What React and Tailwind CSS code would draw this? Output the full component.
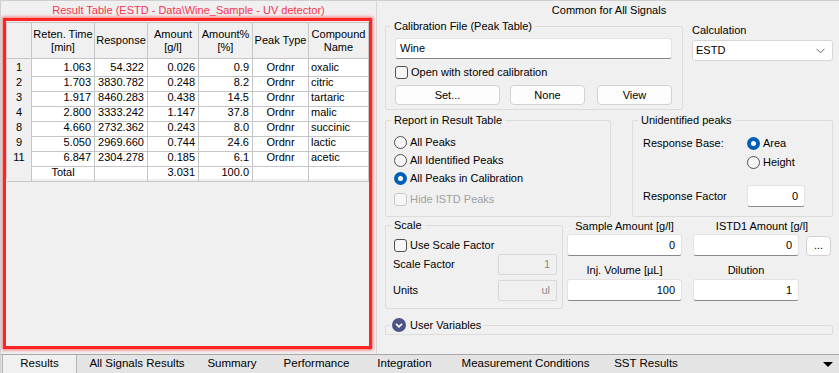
import React from "react";

const rows = [
    ["1", "1.063", "54.322", "0.026", "0.9", "Ordnr", "oxalic"],
    ["2", "1.703", "3830.782", "0.248", "8.2", "Ordnr", "citric"],
    ["3", "1.917", "8460.283", "0.438", "14.5", "Ordnr", "tartaric"],
    ["4", "2.800", "3333.242", "1.147", "37.8", "Ordnr", "malic"],
    ["8", "4.660", "2732.362", "0.243", "8.0", "Ordnr", "succinic"],
    ["9", "5.050", "2969.660", "0.744", "24.6", "Ordnr", "lactic"],
    ["11", "6.847", "2304.278", "0.185", "6.1", "Ordnr", "acetic"],
];

const tabs = [
    ["Results", "w-[75px]"],
    ["All Signals Results", "w-[120px]"],
    ["Summary", "w-[70px]"],
    ["Performance", "w-[99px]"],
    ["Integration", "w-[77px]"],
    ["Measurement Conditions", "w-[165px]"],
    ["SST Results", "w-[76px]"],
];

const cell = "border-r border-b border-[#c6c6c6] flex items-center";

const Radio = ({ checked, label }) => (
    <div className="flex items-center h-[18px] gap-[3px]">
        {checked ? (
            <span className="w-[13px] h-[13px] rounded-full bg-[#005fb8] flex items-center justify-center">
                <span className="w-[5px] h-[5px] rounded-full bg-white" />
            </span>
        ) : (
            <span className="w-[13px] h-[13px] rounded-full border border-[#505050] bg-[#f6f6f6]" />
        )}
        <span>{label}</span>
    </div>
);

const Check = ({ label, disabled }) => (
    <div className={`flex items-center gap-[3px] ${disabled ? "text-[#a0a0a0]" : ""}`}>
        <span
            className={`w-[13px] h-[13px] rounded-[3px] border bg-[#f6f6f6] ${
                disabled ? "border-[#c8c8c8]" : "border-[#505050]"
            }`}
        />
        <span>{label}</span>
    </div>
);

const Legend = ({ children }) => (
    <div className="-mt-[8px] ml-[5px] px-[3px] w-fit h-[14px] leading-[14px] bg-[#f0f0f0] flex items-center">
        {children}
    </div>
);

const Field = ({ value, className = "" }) => (
    <div
        className={`h-[22px] bg-white border border-[#e3e3e3] border-b-[#888] rounded-[3px] flex items-center justify-end pr-[6px] ${className}`}
    >
        {value}
    </div>
);

const Btn = ({ children, className = "" }) => (
    <div
        className={`h-[20px] bg-[#fdfdfd] border border-[#d2d2d2] rounded-[4px] flex items-center justify-center ${className}`}
    >
        {children}
    </div>
);

const Dimmed = ({ value }) => (
    <div className="w-[59px] h-[21px] border border-[#d8d8d8] rounded-[2px] flex items-center justify-end pr-[6px] text-[#8c8c8c]">
        {value}
    </div>
);

export default function App() {
    return (
        <div className="w-[839px] h-[373px] overflow-hidden bg-[#f0f0f0] border-t border-l border-[#d0d0d0] flex flex-col font-['Liberation_Sans',Arial,sans-serif] text-[11px] text-black">
            <div className="flex h-[353px]">
                {/* left: result table */}
                <div className="w-[376px] border-r border-[#d8d8d8] flex flex-col">
                    <div className="h-[17px] leading-[18px] text-center text-[#f5334f]">
                        Result Table (ESTD - Data\Wine_Sample - UV detector)
                    </div>
                    <div className="ml-[2px] w-[369px] h-[331px] border-[3px] border-[#ff2424] shadow-[0_0_3px_1px_rgba(255,70,70,0.75)] pt-px">
                        <div className="border-l border-t border-[#c6c6c6] w-[363px]">
                            <div className="grid grid-cols-[25px_63px_53px_51px_54px_56px_60px] h-[36px] bg-[#f0f0f0] leading-[13px] text-center">
                                <div className={`${cell} justify-center`} />
                                <div className={`${cell} justify-center`}>Reten. Time<br />[min]</div>
                                <div className={`${cell} justify-center`}>Response</div>
                                <div className={`${cell} justify-center`}>Amount<br />[g/l]</div>
                                <div className={`${cell} justify-center`}>Amount%<br />[%]</div>
                                <div className={`${cell} justify-center`}>Peak Type</div>
                                <div className={`${cell} justify-center`}>Compound<br />Name</div>
                            </div>
                            {rows.map((r) => (
                                <div key={r[0]} className="grid grid-cols-[25px_63px_53px_51px_54px_56px_60px] h-[15px] bg-white">
                                    <div className={`${cell} justify-center bg-[#f0f0f0]`}>{r[0]}</div>
                                    <div className={`${cell} justify-end pr-[3px]`}>{r[1]}</div>
                                    <div className={`${cell} justify-end pr-[3px]`}>{r[2]}</div>
                                    <div className={`${cell} justify-end pr-[3px]`}>{r[3]}</div>
                                    <div className={`${cell} justify-end pr-[3px]`}>{r[4]}</div>
                                    <div className={`${cell} justify-center`}>{r[5]}</div>
                                    <div className={`${cell} pl-[2px]`}>{r[6]}</div>
                                </div>
                            ))}
                            <div className="grid grid-cols-[25px_63px_53px_51px_54px_56px_60px] h-[15px] bg-white">
                                <div className={`${cell} bg-[#f0f0f0]`} />
                                <div className={`${cell} justify-center`}>Total</div>
                                <div className={cell} />
                                <div className={`${cell} justify-end pr-[3px]`}>3.031</div>
                                <div className={`${cell} justify-end pr-[3px]`}>100.0</div>
                                <div className={cell} />
                                <div className={cell} />
                            </div>
                        </div>
                    </div>
                </div>

                {/* right: common settings */}
                <div className="flex-1 pl-[8px] flex flex-col">
                    <div className="h-[17px] leading-[18px] text-center pr-[6px]">Common for All Signals</div>

                    <div className="flex items-start">
                        <div className="mt-[8px] w-[298px] border border-[#dcdcdc] rounded-[2px] pb-[4px]">
                            <Legend>Calibration File (Peak Table)</Legend>
                            <div className="mt-[5px] ml-[9px] w-[277px] h-[21px] bg-white border border-[#e3e3e3] border-b-[#888] rounded-[3px] flex items-center pl-[4px]">
                                Wine
                            </div>
                            <div className="mt-[5px] ml-[9px] h-[13px]">
                                <Check label="Open with stored calibration" />
                            </div>
                            <div className="mt-[8px] ml-[9px] flex">
                                <Btn className="w-[105px]">Set...</Btn>
                                <Btn className="w-[75px] ml-[10px]">None</Btn>
                                <Btn className="w-[75px] ml-[12px]">View</Btn>
                            </div>
                        </div>
                        <div className="mt-[5px] ml-[9px] w-[141px] flex flex-col">
                            <div className="h-[14px] leading-[14px]">Calculation</div>
                            <div className="mt-[3px] h-[21px] bg-white border border-[#d6d6d6] rounded-[3px] flex items-center justify-between pl-[3px] pr-[7px]">
                                <span>ESTD</span>
                                <svg width="9" height="6" viewBox="0 0 9 6">
                                    <polyline points="0.5,0.8 4.5,4.8 8.5,0.8" fill="none" stroke="#6a6a6a" strokeWidth="1" />
                                </svg>
                            </div>
                        </div>
                    </div>

                    <div className="flex mt-[10px]">
                        <div className="w-[226px] h-[97px] border border-[#dcdcdc] rounded-[2px]">
                            <Legend>Report in Result Table</Legend>
                            <div className="mt-[6px] ml-[8px]">
                                <Radio label="All Peaks" />
                                <Radio label="All Identified Peaks" />
                                <Radio checked label="All Peaks in Calibration" />
                                <div className="mt-[3px] h-[18px] flex items-center">
                                    <Check disabled label="Hide ISTD Peaks" />
                                </div>
                            </div>
                        </div>
                        <div className="ml-[21px] w-[201px] h-[97px] border border-[#dcdcdc] rounded-[2px]">
                            <Legend>Unidentified peaks</Legend>
                            <div className="mt-[7px] ml-[10px] flex">
                                <div className="w-[104px] h-[19px] flex items-center">Response Base:</div>
                                <div>
                                    <div className="h-[19px] flex items-center"><Radio checked label="Area" /></div>
                                    <div className="h-[19px] flex items-center"><Radio label="Height" /></div>
                                </div>
                            </div>
                            <div className="mt-[13px] ml-[10px] flex items-center">
                                <div className="w-[104px]">Response Factor</div>
                                <Field value="0" className="w-[58px] h-[21px]" />
                            </div>
                        </div>
                    </div>

                    <div className="flex items-start">
                        <div className="mt-[8px] w-[178px] h-[84px] border border-[#dcdcdc] rounded-[2px]">
                            <Legend>Scale</Legend>
                            <div className="mt-[6px] ml-[8px] h-[14px] flex items-center">
                                <Check label="Use Scale Factor" />
                            </div>
                            <div className="mt-[2px] ml-[7px] mr-[5px] flex items-center justify-between">
                                <span>Scale Factor</span>
                                <Dimmed value="1" />
                            </div>
                            <div className="mt-[5px] ml-[7px] mr-[5px] flex items-center justify-between">
                                <span>Units</span>
                                <Dimmed value="ul" />
                            </div>
                        </div>
                        <div className="mt-[2px] ml-[4px] flex">
                            <div className="w-[115px] flex flex-col">
                                <div className="h-[14px] leading-[14px] text-center">Sample Amount [g/l]</div>
                                <Field value="0" className="mt-px" />
                                <div className="mt-[7px] h-[14px] leading-[14px] text-center">Inj. Volume [µL]</div>
                                <Field value="100" className="mt-[2px]" />
                            </div>
                            <div className="ml-[11px] w-[138px] flex flex-col">
                                <div className="h-[14px] leading-[14px] text-center">ISTD1 Amount [g/l]</div>
                                <div className="mt-px flex items-end">
                                    <Field value="0" className="w-[106px]" />
                                    <Btn className="ml-[7px] w-[25px] pb-[2px]">...</Btn>
                                </div>
                                <div className="mt-[7px] h-[14px] leading-[14px] w-[106px] text-center">Dilution</div>
                                <Field value="1" className="mt-[2px] w-[106px]" />
                            </div>
                        </div>
                    </div>

                    <div className="mt-[16px] w-[448px] h-[10px] border border-[#dcdcdc] rounded-[2px]">
                        <div className="-mt-[8px] ml-[4px] px-[2px] pr-[3px] w-fit h-[14px] bg-[#f0f0f0] flex items-center gap-[4px]">
                            <svg width="14" height="14" viewBox="0 0 14 14">
                                <circle cx="7" cy="7" r="7" fill="#4a5488" />
                                <polyline points="4,5.8 7,8.8 10,5.8" fill="none" stroke="#fff" strokeWidth="1.8" />
                            </svg>
                            <span>User Variables</span>
                        </div>
                    </div>
                </div>
            </div>

            {/* bottom tabs */}
            <div className="h-[19px] border-t border-[#a8a8a8] bg-[#e4e4e4] flex text-[11.5px]">
                <div className="w-[1px]" />
                {tabs.map(([t, w], i) => (
                    <div
                        key={t}
                        className={`${w} h-full flex items-center justify-center ${
                            i === 0 ? "bg-[#f0f0f0] border-l border-r border-[#b4b4b4]" : ""
                        }`}
                    >
                        {t}
                    </div>
                ))}
                <div className="ml-auto mr-[6px] self-center w-0 h-0 border-l-[5px] border-r-[5px] border-t-[5px] border-l-transparent border-r-transparent border-t-black" />
            </div>
        </div>
    );
}
